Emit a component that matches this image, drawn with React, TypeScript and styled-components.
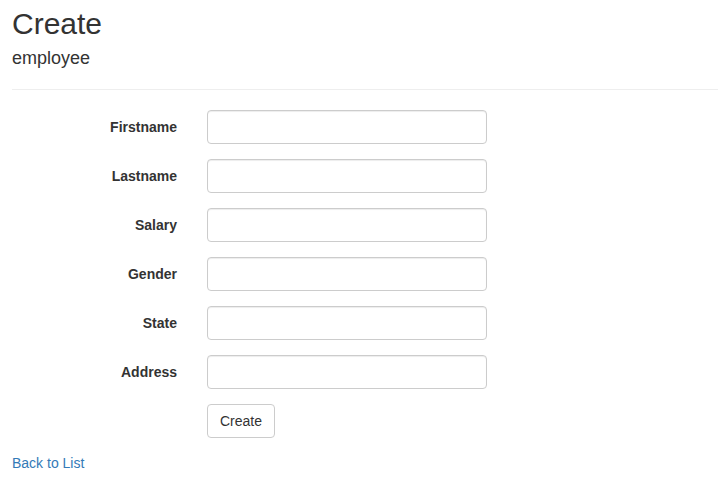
import React from "react";
import styled, { createGlobalStyle } from "styled-components";

const GlobalStyle = createGlobalStyle`
  html, body {
    margin: 0;
    padding: 0;
    background: #fff;
  }
  body {
    font-family: "Liberation Sans", Arial, sans-serif;
    font-size: 14px;
    line-height: 1.42857143;
    color: #333;
  }
  * {
    box-sizing: border-box;
  }
`;

const Page = styled.div`
  padding: 7px 0 0 12px;
`;

const Title = styled.h2`
  margin: 0 0 8px;
  font-size: 30px;
  font-weight: 500;
  line-height: 33px;
  color: #333;
`;

const Subtitle = styled.h4`
  margin: 0;
  font-size: 18px;
  font-weight: 500;
  line-height: 20px;
  color: #333;
`;

const Divider = styled.hr`
  margin: 21px 0 20px;
  border: 0;
  border-top: 1px solid #eee;
`;

const Form = styled.form`
  display: flex;
  flex-direction: column;
  gap: 15px;
`;

const Row = styled.div`
  display: grid;
  grid-template-columns: 165px 280px;
  column-gap: 30px;
  align-items: center;
`;

const Label = styled.label`
  text-align: right;
  font-weight: 700;
  font-size: 14px;
`;

const Input = styled.input`
  display: block;
  width: 280px;
  height: 34px;
  padding: 6px 12px;
  font-size: 14px;
  font-family: inherit;
  color: #555;
  background: #fff;
  border: 1px solid #ccc;
  border-radius: 4px;
  box-shadow: inset 0 1px 1px rgba(0, 0, 0, 0.075);
`;

const Button = styled.button`
  grid-column: 2;
  justify-self: start;
  height: 34px;
  padding: 6px 12px;
  font-family: inherit;
  font-size: 14px;
  line-height: 20px;
  color: #333;
  background: #fff;
  border: 1px solid #ccc;
  border-radius: 4px;
`;

const Footer = styled.div`
  margin-top: 15px;
`;

const Link = styled.a`
  color: #337ab7;
  text-decoration: none;
`;

const fields = ["Firstname", "Lastname", "Salary", "Gender", "State", "Address"];

export default function App() {
  return (
    <>
      <GlobalStyle />
      <Page>
        <Title>Create</Title>
        <Subtitle>employee</Subtitle>
        <Divider />
        <Form onSubmit={(e) => e.preventDefault()}>
          {fields.map((f) => (
            <Row key={f}>
              <Label htmlFor={f}>{f}</Label>
              <Input id={f} type="text" />
            </Row>
          ))}
          <Row>
            <Button type="submit">Create</Button>
          </Row>
        </Form>
        <Footer>
          <Link href="#">Back to List</Link>
        </Footer>
      </Page>
    </>
  );
}
